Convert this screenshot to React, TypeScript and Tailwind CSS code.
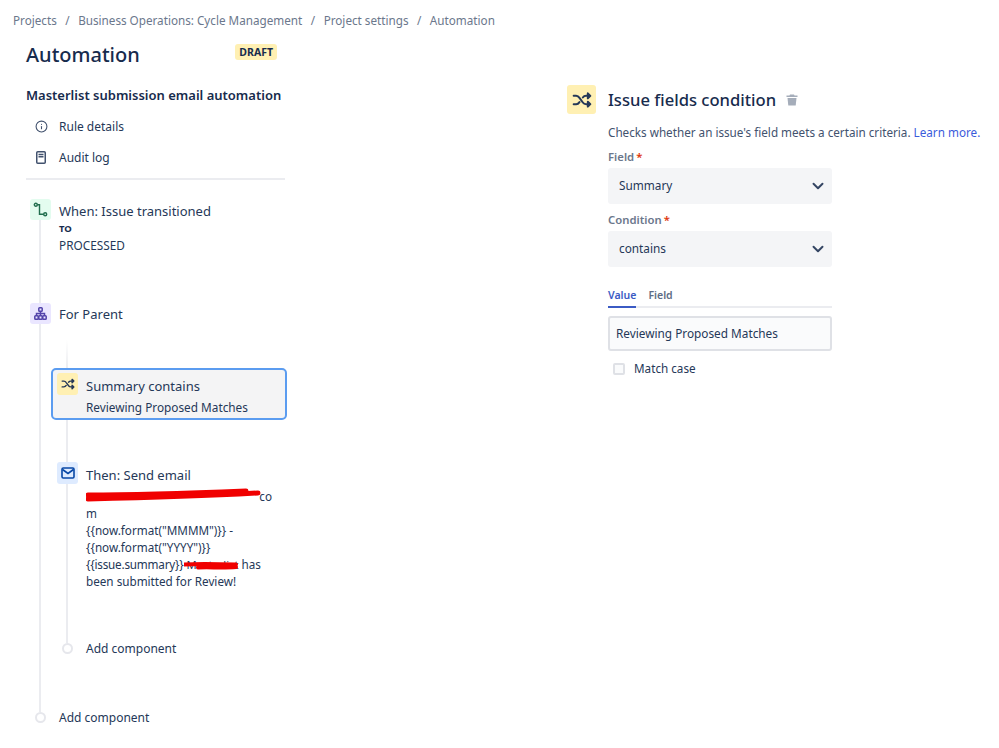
import React from 'react';
import { ChevronDown, Info } from 'lucide-react';

const ShuffleIcon = ({ size = 16 }: { size?: number }) => (
  <svg width={size} height={size} viewBox="0 0 24 24" fill="none" stroke="#253858" strokeWidth="2.4" strokeLinecap="round" strokeLinejoin="round">
    <path d="M2 7h3c2 0 3 1 4 2.500l4 5.500c1 1.500 2 2 4 2h3" />
    <path d="M2 17h3c2 0 3-1 4-2.500M13 9c1-1.500 2-2 4-2h3" />
    <path d="M19 4l3 3-3 3zM19 14l3 3-3 3z" fill="#253858" />
  </svg>
);

const Tile = ({ className, children }: { className: string; children: React.ReactNode }) => (
  <div className={`relative z-10 flex shrink-0 items-center justify-center rounded-[3px] ${className}`}>{children}</div>
);

const Dot = () => <div className="relative z-10 h-[11px] w-[11px] shrink-0 rounded-full border-2 border-[#e6e7ec] bg-white" />;

const Field = ({ label, value }: { label: string; value: string }) => (
  <div>
    <div className="text-[11.3px] leading-[16px] font-semibold text-[#6b778c]">
      {label}
      <span className="ml-[2px] text-[#de350b]">*</span>
    </div>
    <div className="mt-[3px] flex h-[36px] items-center justify-between rounded-[3px] bg-[#f4f5f7] pr-[5px] pl-[11px] text-[11.8px] text-[#253858]">
      <span>{value}</span>
      <ChevronDown size={18} strokeWidth={2.6} color="#344563" />
    </div>
  </div>
);

export default function App() {
  return (
    <div className="h-[748px] w-[999px] overflow-hidden bg-white font-['Noto_Sans',sans-serif] text-[#253858]">
      <nav className="flex h-[42px] items-center gap-[8.5px] pl-[13px] text-[11.7px] text-[#6b778c]">
        <span>Projects</span>
        <span>/</span>
        <span>Business Operations: Cycle Management</span>
        <span>/</span>
        <span>Project settings</span>
        <span>/</span>
        <span>Automation</span>
      </nav>

      <div className="flex">
        {/* rule sidebar */}
        <aside className="ml-[26px] w-[261px] shrink-0">
          <div className="flex h-[26px] items-center justify-between pr-[10px]">
            <h1 className="text-[20px] leading-[26px] font-medium text-[#172b4d]">Automation</h1>
            <span className="-mt-[6px] rounded-[3px] bg-[#fff0b3] px-[4px] text-[10.5px] leading-[16px] font-bold text-[#172b4d]">DRAFT</span>
          </div>
          <h2 className="mt-[17px] text-[13px] leading-[20px] font-semibold whitespace-nowrap text-[#172b4d]">Masterlist submission email automation</h2>

          <div className="mt-[11px] flex h-[20px] items-center pl-[9px] text-[12px]">
            <Info size={13} strokeWidth={2} color="#42526e" />
            <span className="ml-[11px] pt-[1px]">Rule details</span>
          </div>
          <div className="mt-[11px] flex h-[20px] items-center pl-[10px] text-[12px]">
            <svg width="10" height="13" viewBox="0 0 10 13" fill="none">
              <rect x="0.75" y="0.75" width="8.500" height="11.500" rx="1" stroke="#42526e" strokeWidth="1.500" />
              <path d="M2.500 3.500h5M2.500 5.700h5" stroke="#42526e" strokeWidth="1.400" />
            </svg>
            <span className="ml-[13px] pt-[1px]">Audit log</span>
          </div>
          <div className="mt-[11px] h-[2px] w-[259px] bg-[#ebecf0]" />

          {/* outer timeline */}
          <div className="relative mt-[19px] pl-[4px]">
            <div className="absolute top-[10px] left-[13px] h-[503px] w-[2px] bg-[#ebecf0]" />

            <div className="flex">
              <Tile className="h-[21px] w-[21px] bg-[#e3fcef]">
                <svg width="15" height="15" viewBox="0 0 15 15" fill="none" stroke="#216e4e" strokeWidth="1.400">
                  <circle cx="2.800" cy="2.800" r="1.500" />
                  <circle cx="12.200" cy="12.200" r="1.500" />
                  <path d="M4.300 2.800H6.500V12.200H10.700" />
                </svg>
              </Tile>
              <div className="ml-[8px]">
                <div className="text-[13px] leading-[24px]">When: Issue transitioned</div>
                <div className="text-[9.500px] leading-[12px] font-bold text-[#172b4d]">TO</div>
                <div className="mt-[1px] text-[11.800px] leading-[18px]">PROCESSED</div>
              </div>
            </div>

            <div className="mt-[49px] flex items-center">
              <Tile className="h-[21px] w-[21px] bg-[#eae6ff]">
                <svg width="13" height="13" viewBox="0 0 13 13" fill="none" stroke="#5243aa" strokeWidth="1.500">
                  <rect x="4.800" y="0.800" width="3.400" height="3.400" rx="0.800" />
                  <rect x="0.800" y="8.800" width="3.400" height="3.400" rx="0.800" />
                  <rect x="4.800" y="8.800" width="3.400" height="3.400" rx="0.800" />
                  <rect x="8.800" y="8.800" width="3.400" height="3.400" rx="0.800" />
                  <path d="M6.500 4.500V8.500M2.500 8.500V6.500H10.500V8.500" />
                </svg>
              </Tile>
              <span className="ml-[8px] pt-[2px] text-[13px]">For Parent</span>
            </div>

            {/* nested branch */}
            <div className="relative mt-[43px] ml-[21px]">
              <div className="absolute top-[-28px] left-[15px] h-[303px] w-[2px] bg-gradient-to-b from-white to-[#ebecf0] to-[30px]" />

              <div className="relative flex h-[52px] w-[236px] rounded-[5px] border-2 border-[#5b9cf0] bg-[#f4f4f5] pt-[3px] pl-[4px]">
                <Tile className="h-[22px] w-[21px] bg-[#fff0b3]">
                  <ShuffleIcon size={14} />
                </Tile>
                <div className="ml-[8px] pt-[2px]">
                  <div className="text-[13px] leading-[22px]">Summary contains</div>
                  <div className="mt-[1px] text-[11.800px] leading-[18px] whitespace-nowrap">Reviewing Proposed Matches</div>
                </div>
              </div>

              <div className="relative mt-[42px] flex pl-[6px]">
                <Tile className="h-[22px] w-[21px] bg-[#deebff]">
                  <svg width="14" height="12" viewBox="0 0 14 12" fill="none" stroke="#0747a6" strokeWidth="1.600">
                    <rect x="1" y="1" width="12" height="10" rx="1.200" />
                    <path d="M1.500 2.500L7 6.500L12.500 2.500" />
                  </svg>
                </Tile>
                <div className="ml-[8px] w-[190px]">
                  <div className="pt-[1px] text-[13px] leading-[25px]">Then: Send email</div>
                  <div className="relative text-[11.700px] leading-[17px] whitespace-nowrap">
                    <div className="pr-[4px] text-right">co</div>
                    <div>m</div>
                    <div>{'{{now.format("MMMM")}} -'}</div>
                    <div>{'{{now.format("YYYY")}}'}</div>
                    <div>
                      <span className="tracking-[-0.2px]">{'{{issue.summary}}'}</span>{' '}
                      <span className="relative text-[11.200px]">
                        Masterlist
                        <svg className="absolute top-[1px] left-[-3px]" width="62" height="14" viewBox="0 0 62 14" fill="none">
                          <path d="M0 6.500C15 5.500 35 6 52 6.500M14 9.500C25 9 40 10 52 9" stroke="#f00000" strokeWidth="4" strokeLinecap="round" />
                        </svg>
                      </span>{' '}
                      has
                    </div>
                    <div>been submitted for Review!</div>
                    <svg className="absolute top-0 left-0" width="178" height="20" viewBox="0 0 178 20" fill="none">
                      <path d="M2 7C50 7 110 5 160 3M2 11C50 10 120 8 172 5" stroke="#f00000" strokeWidth="5" strokeLinecap="round" />
                    </svg>
                  </div>
                </div>
              </div>

              <div className="mt-[49px] flex items-center pl-[11px]">
                <Dot />
                <span className="ml-[13px] pt-[1px] text-[12px]">Add component</span>
              </div>
            </div>

            <div className="mt-[50px] flex items-center pl-[5px]">
              <Dot />
              <span className="ml-[13px] pt-[1px] text-[12px]">Add component</span>
            </div>
          </div>
        </aside>

        {/* condition panel */}
        <section className="ml-[280px] w-[412px] shrink-0 pt-[43px]">
          <div className="flex items-center">
            <Tile className="h-[29px] w-[29px] bg-[#fff0b3]">
              <ShuffleIcon size={20} />
            </Tile>
            <h3 className="ml-[12px] pt-[1px] text-[16.600px] font-medium text-[#172b4d]">Issue fields condition</h3>
            <svg className="ml-[10px]" width="12" height="12" viewBox="0 0 12 12">
              <path d="M4 0.500H8L8.500 1.500H11.500V3H0.500V1.500H3.500Z" fill="#a5adba" />
              <path d="M1.500 4H10.500L9.700 11.500H2.300Z" fill="#a5adba" />
            </svg>
          </div>
          <div className="mt-[8px] pl-[41px]">
            <p className="text-[11.700px] leading-[20px] whitespace-nowrap text-[#42526e]">
              Checks whether an issue's field meets a certain criteria. <span className="text-[#3b5bdb]">Learn more.</span>
            </p>
            <div className="mt-[7px] flex w-[224px] flex-col gap-[8px]">
              <Field label="Field" value="Summary" />
              <Field label="Condition" value="contains" />
            </div>
            <div className="mt-[21px] flex w-[224px] gap-[12px] border-b-2 border-[#ebecf0] text-[10.500px] font-semibold">
              <span className="-mb-[2px] border-b-2 border-[#3b5bc4] pb-[2px] text-[#3b5bc4]">Value</span>
              <span className="text-[#5e6c84]">Field</span>
            </div>
            <div className="mt-[8px] flex h-[35px] w-[224px] items-center rounded-[3px] border-2 border-[#dfe1e6] bg-[#fafbfc] pt-[1px] pl-[6px] text-[11.800px] text-[#253858]">
              Reviewing Proposed Matches
            </div>
            <label className="mt-[8px] flex h-[20px] items-center pl-[5px] text-[11.700px]">
              <span className="h-[12px] w-[12px] rounded-[2px] border-2 border-[#dfe1e6] bg-[#fafbfc]" />
              <span className="ml-[9px]">Match case</span>
            </label>
          </div>
        </section>
      </div>
    </div>
  );
}
